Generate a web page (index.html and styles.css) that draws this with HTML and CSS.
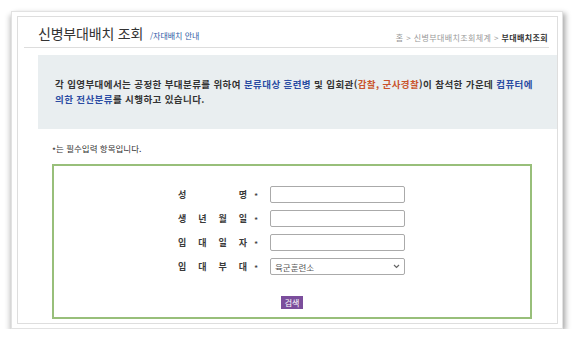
FILE: index.html
```html
<!DOCTYPE html>
<html lang="ko">
<head>
    <meta charset="UTF-8">
    <meta name="viewport" content="width=device-width, initial-scale=1.0">
    <title>신병부대배치 조회</title>
    <link rel="stylesheet" href="styles.css">
</head>
<body>
    <div class="frame">
        <div class="sheet">
            <div class="head">
                <h1>신병부대배치 조회 <span class="sub">/자대배치 안내</span></h1>
                <div class="crumb">홈 &gt; 신병부대배치조회체계 &gt; <b>부대배치조회</b></div>
            </div>
            <div class="notice">
                <p>각 입영부대에서는 공정한 부대분류를 위하여 <span class="blue">분류대상 훈련병</span> 및 입회관(<span class="red">감찰, 군사경찰</span>)이 참석한 가운데 <span class="blue">컴퓨터에<br>의한 전산분류</span>를 시행하고 있습니다.</p>
            </div>
            <p class="note"><span class="mark">*</span>는 필수입력 항목입니다.</p>
            <form class="search" onsubmit="return false">
                <div class="row">
                    <label class="label"><span class="name">성 명</span><span class="star">*</span></label>
                    <input type="text" class="field">
                </div>
                <div class="row">
                    <label class="label"><span class="name">생 년 월 일</span><span class="star">*</span></label>
                    <input type="text" class="field">
                </div>
                <div class="row">
                    <label class="label"><span class="name">입 대 일 자</span><span class="star">*</span></label>
                    <input type="text" class="field">
                </div>
                <div class="row">
                    <label class="label"><span class="name">입 대 부 대</span><span class="star">*</span></label>
                    <div class="select-wrap">
                        <select class="field">
                            <option>육군훈련소</option>
                        </select>
                        <svg class="chevron" width="7" height="5" viewBox="0 0 7 5"><path d="M1 1 L3.5 3.5 L6 1" fill="none" stroke="#666" stroke-width="1.2"/></svg>
                    </div>
                </div>
                <div class="actions">
                    <button type="submit">검색</button>
                </div>
            </form>
        </div>
    </div>
</body>
</html>
```

FILE: styles.css
```css
body {
    margin: 0;
    background: #fff;
    font-family: "Noto Sans CJK KR", "Noto Sans", sans-serif;
    color: #333;
}

.frame {
    margin: 11px 0 0 11px;
    width: 541px;
    height: 308px;
    padding: 4px 4px 4px 5px;
    border: 1px solid #e2e2e2;
    box-shadow: 3px 2px 5px rgba(0, 0, 0, 0.28), -2px 4px 5px rgba(0, 0, 0, 0.18);
}

.sheet {
    height: 306px;
    border: 1px solid #dedede;
}

.head {
    display: flex;
    justify-content: space-between;
    align-items: flex-end;
    height: 30px;
    margin: 0 8px 0 6px;
    padding: 0 1px 0 14px;
    border-bottom: 1px solid #dddddd;
}

h1 {
    margin: 0 0 2px;
    font-size: 14px;
    font-weight: normal;
    letter-spacing: -0.2px;
    line-height: 18px;
    color: #333;
}

.sub {
    margin-left: 3px;
    font-size: 8px;
    letter-spacing: 0;
    color: #2f5da6;
}

.crumb {
    margin-bottom: 4px;
    font-size: 8px;
    line-height: 10px;
    letter-spacing: 0.4px;
    color: #999;
}

.crumb b {
    color: #333;
}

.notice {
    display: flex;
    align-items: center;
    height: 74px;
    margin: 7px 0 0 20px;
    padding-left: 17px;
    background: #e9eef0;
}

.notice p {
    margin: 0;
    font-size: 9.5px;
    font-weight: bold;
    line-height: 15px;
    letter-spacing: 0.4px;
    color: #333;
}

.blue {
    color: #2b4ca3;
}

.red {
    color: #c9542c;
}

.note {
    margin: 13px 0 0 34px;
    font-size: 8.5px;
    line-height: 12px;
    color: #333;
}

.mark {
    position: relative;
    top: 2px;
}

.search {
    width: 476px;
    height: 151px;
    margin: 10px 0 0 34px;
    padding: 0;
    border: 2px solid #98bf7a;
    box-sizing: content-box;
}

.row {
    display: flex;
    align-items: center;
    height: 17px;
    margin: 0 0 7px 124px;
}

.row:first-child {
    margin-top: 20px;
}

.label {
    display: flex;
    align-items: center;
    width: 92px;
    font-size: 9px;
    font-weight: bold;
    color: #3a3a3a;
}

.name {
    display: inline-block;
    width: 69px;
    text-align: justify;
    text-align-last: justify;
}

.star {
    margin-left: 7px;
    padding-top: 3px;
    font-weight: normal;
}

.field {
    width: 135px;
    height: 17px;
    margin: 0;
    padding: 0 4px;
    border: 1px solid #aaa;
    border-radius: 2px;
    box-sizing: border-box;
    font-family: inherit;
    font-size: 8.5px;
    color: #555;
    background: #fff;
}

.select-wrap {
    position: relative;
    display: flex;
}

select.field {
    appearance: none;
    -webkit-appearance: none;
}

.chevron {
    position: absolute;
    right: 5px;
    top: 6px;
    pointer-events: none;
}

.actions {
    display: flex;
    justify-content: center;
    margin-top: 21px;
}

button {
    height: 13px;
    padding: 0 4px;
    border: none;
    font-family: inherit;
    font-size: 8px;
    line-height: 13px;
    color: #fff;
    background: #7b4e9c;
    cursor: pointer;
}
```
